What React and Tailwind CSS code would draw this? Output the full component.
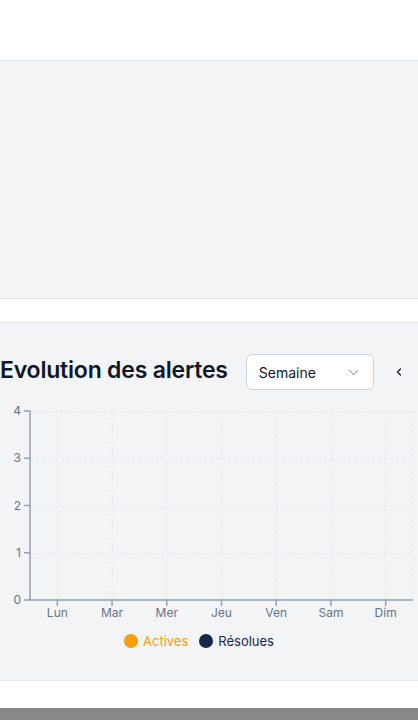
import React from "react";

const days = ["Lun", "Mar", "Mer", "Jeu", "Ven", "Sam", "Dim"];

function Chart() {
  const x0 = 30;
  const x1 = 413;
  const yTop = 21;
  const yBot = 210;
  const step = (x1 - x0) / 7;
  const ticks = [0, 1, 2, 3, 4];
  const yFor = (v) => yBot - ((yBot - yTop) * v) / 4;
  return (
    <svg width="418" height="235" viewBox="0 0 418 235" className="block">
      <g stroke="#e2e5ea" strokeDasharray="3 3" strokeWidth="1">
        {ticks.slice(1).map((t) => (
          <line key={t} x1={x0} x2={x1} y1={yFor(t) + 0.5} y2={yFor(t) + 0.5} />
        ))}
        {days.map((d, i) => (
          <line key={d} x1={x0 + step * (i + 0.5)} x2={x0 + step * (i + 0.5)} y1={yTop} y2={yBot} />
        ))}
        <line x1={x1} x2={x1} y1={yTop} y2={yBot} />
      </g>
      <g stroke="#94a0b4" strokeWidth="1.5">
        <line x1={x0} x2={x0} y1={yTop} y2={yBot} />
        <line x1={x0} x2={x1} y1={yBot} y2={yBot} />
        {ticks.map((t) => (
          <line key={t} x1={x0 - 6} x2={x0} y1={yFor(t)} y2={yFor(t)} />
        ))}
        {days.map((d, i) => (
          <line key={d} x1={x0 + step * (i + 0.5)} x2={x0 + step * (i + 0.5)} y1={yBot} y2={yBot + 6} />
        ))}
      </g>
      <g fill="#64748b" fontSize="12" fontFamily="Inter, sans-serif">
        {ticks.map((t) => (
          <text key={t} x={x0 - 9} y={yFor(t) + 4} textAnchor="end">
            {t}
          </text>
        ))}
        {days.map((d, i) => (
          <text key={d} x={x0 + step * (i + 0.5)} y={yBot + 17} textAnchor="middle">
            {d}
          </text>
        ))}
      </g>
    </svg>
  );
}

export default function App() {
  return (
    <div className="w-[418px] h-[720px] overflow-hidden bg-white" style={{ fontFamily: "Inter, 'Noto Sans', sans-serif" }}>
      <div className="h-[61px] bg-white border-b border-[#e2e5e9]" />
      <div className="h-[238px] bg-[#f3f4f6] border-b border-[#e2e5e9]" />
      <div className="h-[24px] bg-white border-b border-[#e2e5e9]" />
      <div className="h-[358px] bg-[#f3f4f6] border-b border-[#e8eaed] pt-[31px]">
        <div className="flex items-center h-[36px]">
          <h2 className="text-[23px] font-semibold text-[#0f172a] tracking-[-0.2px] leading-none whitespace-nowrap -mt-[3px]">
            Evolution des alertes
          </h2>
          <div className="ml-[18px] w-[128px] h-[36px] shrink-0 bg-white border border-[#cbd5e1] rounded-md flex items-center justify-between pl-[12px] pr-[11px]">
            <span className="text-[14px] text-[#0f172a]">Semaine</span>
            <svg width="17" height="17" viewBox="0 0 24 24" fill="none" stroke="#94a3b8" strokeWidth="1.6" strokeLinecap="round" strokeLinejoin="round">
              <path d="m6 9 6 6 6-6" />
            </svg>
          </div>
          <div className="ml-[19px] flex items-center">
            <svg width="12" height="12" viewBox="0 0 24 24" fill="none" stroke="#0f172a" strokeWidth="2.5" strokeLinecap="round" strokeLinejoin="round">
              <path d="m15 18-6-6 6-6" />
            </svg>
          </div>
        </div>
        <Chart />
        <div className="flex items-center justify-center gap-[11px] mt-[9px] pr-[20px] text-[13px] leading-none">
          <div className="flex items-center gap-[5px]">
            <span className="w-[14px] h-[14px] rounded-full bg-[#f59e0b] inline-block" />
            <span className="text-[#f59e0b]">Actives</span>
          </div>
          <div className="flex items-center gap-[5px]">
            <span className="w-[14px] h-[14px] rounded-full bg-[#14294a] inline-block" />
            <span className="text-[#14294a]">Résolues</span>
          </div>
        </div>
      </div>
      <div className="h-[27px] bg-white" />
      <div className="h-[12px] bg-[#888888]" />
    </div>
  );
}
